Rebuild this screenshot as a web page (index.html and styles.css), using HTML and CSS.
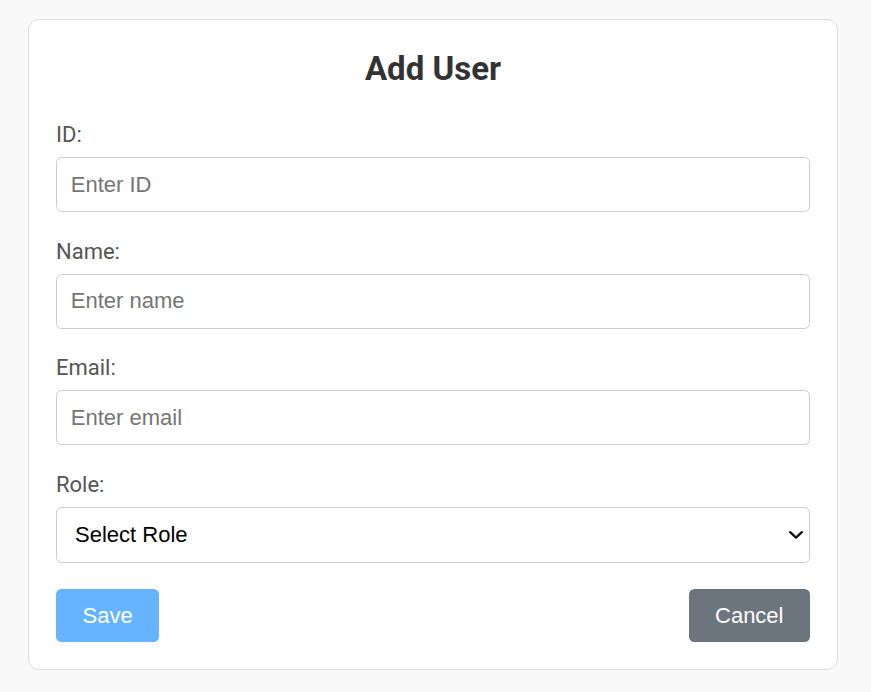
FILE: index.html
```html
<!DOCTYPE html>
<html lang="en">
<head>
<meta charset="utf-8">
<title>Add User</title>
<link rel="stylesheet" href="styles.css">
</head>
<body>
<div class="card">
  <h2 class="title">Add User</h2>
  <form class="form">
    <div class="group">
      <label class="label" for="id">ID:</label>
      <input class="field" id="id" type="text" placeholder="Enter ID">
    </div>
    <div class="group">
      <label class="label" for="name">Name:</label>
      <input class="field" id="name" type="text" placeholder="Enter name">
    </div>
    <div class="group">
      <label class="label" for="email">Email:</label>
      <input class="field" id="email" type="email" placeholder="Enter email">
    </div>
    <div class="group">
      <label class="label" for="role">Role:</label>
      <div class="select-wrap">
        <select class="field select" id="role">
          <option>Select Role</option>
          <option>Admin</option>
          <option>User</option>
        </select>
        <svg class="chevron" width="14" height="8" viewBox="0 0 14 8" aria-hidden="true">
          <path d="M1.2 1.2 L7 6.6 L12.8 1.2" fill="none" stroke="#111111" stroke-width="2.3" stroke-linecap="round" stroke-linejoin="round"/>
        </svg>
      </div>
    </div>
    <div class="actions">
      <button type="button" class="btn btn-save">Save</button>
      <button type="button" class="btn btn-cancel">Cancel</button>
    </div>
  </form>
</div>
</body>
</html>
```
FILE: styles.css
```css
html, body {
  margin: 0;
  padding: 0;
  background: #f9f9f9;
}
body {
  padding-top: 19px;
  padding-left: 28px;
}
.card {
  box-sizing: border-box;
  width: 810px;
  background: #ffffff;
  border: 1px solid #dddddd;
  border-radius: 11px;
  padding: 29px 27px 27px 27px;
}
.title {
  margin: 0 0 34px 0;
  text-align: center;
  font-family: Roboto, "Liberation Sans", sans-serif;
  font-weight: 700;
  font-size: 33px;
  color: #333333;
}
.form {
  margin: 0;
}
.group {
  margin-bottom: 26.55px;
}
.group:last-of-type {
  margin-bottom: 28px;
}
.label {
  display: block;
  margin-bottom: 10px;
  font-family: Roboto, "Liberation Sans", sans-serif;
  font-size: 22px;
  color: #555555;
}
.field {
  display: block;
  box-sizing: border-box;
  width: 100%;
  height: 55px;
  margin: 0;
  padding: 0 13.75px;
  border: 1px solid #cccccc;
  border-radius: 5.5px;
  background: #ffffff;
  font-family: "Liberation Sans", Arial, sans-serif;
  font-size: 22px;
  color: #000000;
}
.field::placeholder {
  color: #757575;
}
.select-wrap {
  position: relative;
}
.select {
  height: 56px;
  padding-left: 18px;
  padding-right: 30px;
  appearance: none;
  -webkit-appearance: none;
}
.chevron {
  position: absolute;
  right: 7px;
  top: 24.5px;
  pointer-events: none;
}
.actions {
  display: flex;
  justify-content: space-between;
}
.btn {
  box-sizing: border-box;
  height: 53px;
  padding: 0 26.5px;
  border: none;
  border-radius: 5.5px;
  font-family: "Liberation Sans", Arial, sans-serif;
  font-size: 22px;
  color: #ffffff;
  cursor: pointer;
}
.btn-save {
  background: #66b3ff;
}
.btn-cancel {
  background: #6c757d;
}
```
